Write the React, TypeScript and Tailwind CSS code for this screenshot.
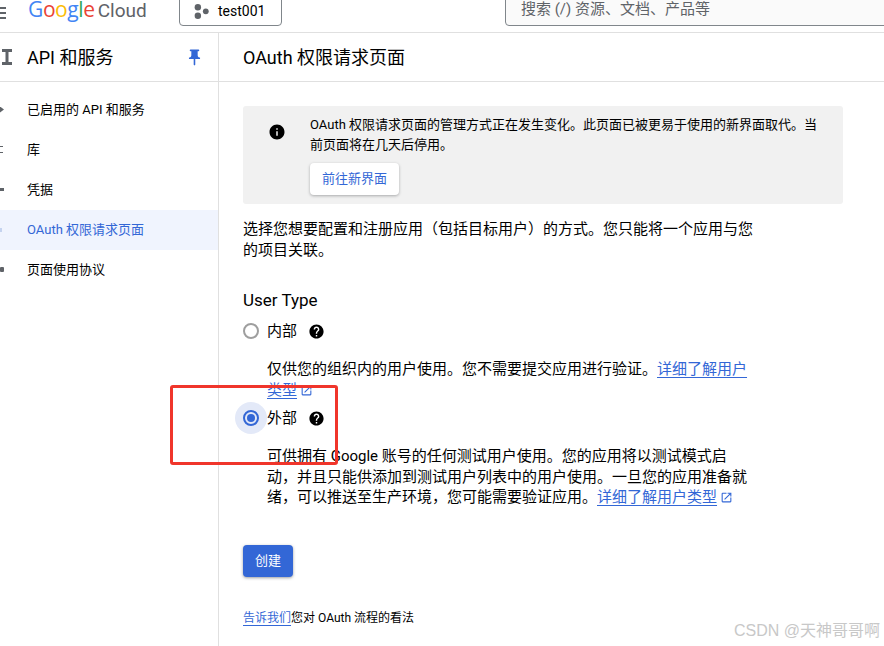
import React from 'react';

const font = { fontFamily: '"Roboto", "Noto Sans CJK SC", sans-serif' };

const navItems = ['已启用的 API 和服务', '库', '凭据', 'OAuth 权限请求页面', '页面使用协议'];

const ExternalIcon = () => (
    <svg viewBox="0 0 24 24" className="inline-block w-[13px] h-[13px] ml-[3px] align-[-2px] fill-[#3367d6]">
        <path d="M19 19H5V5h7V3H5a2 2 0 0 0-2 2v14a2 2 0 0 0 2 2h14a2 2 0 0 0 2-2v-7h-2v7zM14 3v2h3.59l-9.83 9.83 1.41 1.41L19 6.41V10h2V3h-7z" />
    </svg>
);

const HelpIcon = () => (
    <svg viewBox="0 0 24 24" className="w-[17px] h-[17px] fill-black">
        <path d="M12 2C6.48 2 2 6.48 2 12s4.48 10 10 10 10-4.48 10-10S17.52 2 12 2zm1 17h-2v-2h2v2zm2.07-7.75-.9.92C13.45 12.9 13 13.5 13 15h-2v-.5c0-1.1.45-2.1 1.17-2.83l1.24-1.26c.37-.36.59-.86.59-1.41 0-1.1-.9-2-2-2s-2 .9-2 2H8c0-2.21 1.79-4 4-4s4 1.79 4 4c0 .88-.36 1.68-.93 2.25z" />
    </svg>
);

const SideGlyph = ({ index }: { index: number }) => {
    if (index === 0) return <span className="w-[4px] h-[6px] bg-[#5f6368] [clip-path:polygon(0_0,100%_50%,0_100%)]" />;
    if (index === 1) return <span className="w-[3px] h-[7px] border-y border-[#5f6368]" />;
    if (index === 2) return <span className="w-[4px] h-[3px] bg-[#5f6368]" />;
    if (index === 3) return <span className="w-[2px] h-[4px] bg-[#c5d3ef]" />;
    return <span className="w-[4px] h-[5px] bg-[#5f6368] rounded-[1px]" />;
};

export default function App() {
    return (
        <div style={font} className="relative w-[884px] h-[646px] overflow-hidden bg-white text-black">
            {/* top bar */}
            <header className="flex h-[33px] border-b border-[#e0e0e0]">
                <div className="w-[28px] pt-[7px] flex flex-col gap-[3px] shrink-0 h-[24px]">
                    <span className="w-[6px] h-[2px] bg-[#5f6368]" />
                    <span className="w-[6px] h-[2px] bg-[#5f6368]" />
                    <span className="w-[6px] h-[2px] bg-[#5f6368]" />
                </div>
                <div className="w-[151px] shrink-0 -mt-[6px] text-[21px] leading-[30px] tracking-[-0.4px] whitespace-nowrap" style={{ fontFamily: '"Open Sans", sans-serif' }}>
                    <span className="text-[#4285f4]">G</span>
                    <span className="text-[#ea4335]">o</span>
                    <span className="text-[#fbbc05]">o</span>
                    <span className="text-[#4285f4]">g</span>
                    <span className="text-[#34a853]">l</span>
                    <span className="text-[#ea4335]">e</span>
                    <span className="ml-[3px] text-[#5f6368] text-[19px] tracking-normal" style={font}>Cloud</span>
                </div>
                <div className="w-[103px] h-[27px] -mt-px shrink-0 flex items-center gap-[9px] pl-[14px] pb-[2px] border border-[#80868b] rounded-b-[4px]">
                    <svg viewBox="0 0 14 14" className="w-[15px] h-[15px] fill-[#5f6368]">
                        <circle cx="3.6" cy="3" r="3" />
                        <circle cx="11" cy="6.8" r="2.7" />
                        <circle cx="3.6" cy="11" r="3" />
                    </svg>
                    <span className="text-[14px]">test001</span>
                </div>
                <div className="ml-[223px] flex-1 h-[27px] -mt-px -mr-[20px] pl-[15px] pb-[7px] flex items-center border border-[#80868b] rounded-bl-[4px] bg-[#fafafa] text-[15px] text-[#5f6368]">
                    搜索 (/) 资源、文档、产品等
                </div>
            </header>

            <div className="flex h-[613px]">
                {/* sidebar */}
                <aside className="w-[219px] shrink-0 border-r border-[#e0e0e0]">
                    <div className="flex items-center h-[49px] border-b border-[#e0e0e0]">
                        <svg viewBox="0 0 10 16" className="ml-[2px] w-[10px] h-[16px] fill-[#5f6368] shrink-0">
                            <path d="M0 0h10v3H6.5v10H10v3H0v-3h3.500V3H0z" />
                        </svg>
                        <span className="ml-[15px] text-[18px]">API 和服务</span>
                        <svg viewBox="0 0 24 24" className="ml-auto mr-[14px] w-[19px] h-[19px] fill-[#3367d6]">
                            <path d="M16 9V4h1a1 1 0 0 0 0-2H7a1 1 0 0 0 0 2h1v5c0 1.66-1.34 3-3 3v2h5.97v7l1 1 1-1v-7H19v-2c-1.66 0-3-1.34-3-3z" />
                        </svg>
                    </div>
                    <nav className="pt-[8px]">
                        {navItems.map((item, i) => (
                            <div
                                key={item}
                                className={`flex items-center h-[40px] pb-[1px] text-[13px] ${i === 3 ? 'bg-[#f0f4fe] text-[#3367d6]' : ''}`}
                            >
                                <span className="w-[27px] flex shrink-0">
                                    <SideGlyph index={i} />
                                </span>
                                {item}
                            </div>
                        ))}
                    </nav>
                </aside>

                {/* main */}
                <main className="flex-1 min-w-0">
                    <div className="flex items-center h-[49px] pl-[24px] border-b border-[#e0e0e0] text-[18px]">
                        OAuth 权限请求页面
                    </div>
                    <div className="pl-[24px] pt-[24px]">
                        <div className="flex w-[600px] h-[98px] bg-[#f1f1f1] rounded-[3px]">
                            <svg viewBox="0 0 24 24" className="ml-[25px] mt-[17px] w-[18px] h-[18px] fill-black shrink-0">
                                <path d="M12 2C6.48 2 2 6.48 2 12s4.48 10 10 10 10-4.48 10-10S17.52 2 12 2zm1 15h-2v-6h2v6zm0-8h-2V7h2v2z" />
                            </svg>
                            <div className="ml-[24px] pt-[9px] w-[516px]">
                                <p className="text-[13px] leading-[20px]">
                                    OAuth 权限请求页面的管理方式正在发生变化。此页面已被更易于使用的新界面取代。当前页面将在几天后停用。
                                </p>
                                <button className="mt-[8px] w-[89px] h-[32px] bg-white rounded-[4px] text-[13px] text-[#3367d6] shadow-[0_1px_3px_rgba(60,64,67,0.4)]">
                                    前往新界面
                                </button>
                            </div>
                        </div>

                        <p className="mt-[15px] w-[512px] text-[15px] leading-[21px]">
                            选择您想要配置和注册应用（包括目标用户）的方式。您只能将一个应用与您的项目关联。
                        </p>

                        <h2 className="mt-[27px] text-[17px] leading-[24px]">User Type</h2>

                        <div className="flex items-center mt-[7px] h-[24px]">
                            <span className="w-[16px] h-[16px] rounded-full border-2 border-[#9e9e9e]" />
                            <span className="ml-[8px] text-[15px]">内部</span>
                            <span className="ml-[11px]"><HelpIcon /></span>
                        </div>
                        <p className="mt-[16px] ml-[24px] w-[486px] text-[15px] leading-[21px]">
                            仅供您的组织内的用户使用。您不需要提交应用进行验证。
                            <a className="text-[#3367d6] underline underline-offset-[3px]">详细了解用户类型</a>
                            <ExternalIcon />
                        </p>

                        <div className="flex items-center mt-[5px] h-[24px] relative">
                            <span className="absolute -left-[8px] w-[32px] h-[32px] rounded-full bg-[#e3e9f8]" />
                            <span className="relative w-[16px] h-[16px] rounded-full border-2 border-[#3367d6] flex items-center justify-center">
                                <span className="w-[8px] h-[8px] rounded-full bg-[#3367d6]" />
                            </span>
                            <span className="relative ml-[8px] text-[15px]">外部</span>
                            <span className="relative ml-[11px]"><HelpIcon /></span>
                        </div>
                        <p className="mt-[16px] ml-[24px] w-[486px] text-[15px] leading-[20.5px]">
                            可供拥有 Google 账号的任何测试用户使用。您的应用将以测试模式启动，并且只能供添加到测试用户列表中的用户使用。一旦您的应用准备就绪，可以推送至生产环境，您可能需要验证应用。
                            <a className="text-[#3367d6] underline underline-offset-[3px]">详细了解用户类型</a>
                            <ExternalIcon />
                        </p>

                        <button className="block mt-[37px] w-[50px] h-[32px] bg-[#3367d6] text-white text-[13px] rounded-[4px] shadow-[0_1px_3px_rgba(60,64,67,0.5)]">
                            创建
                        </button>

                        <p className="mt-[32px] text-[12px] leading-[18px]">
                            <a className="text-[#3367d6] underline underline-offset-[3px]">告诉我们</a>您对 OAuth 流程的看法
                        </p>
                    </div>
                </main>
            </div>

            {/* annotation and watermark drawn over the page */}
            <div className="absolute left-[170px] top-[385px] w-[168px] h-[80px] border-[3px] border-[#f0352b] rounded-[3px]" />
            <div className="absolute right-[4px] bottom-[3px] text-[16px] text-[#c8c8c8]" style={{ fontFamily: '"Liberation Sans", "Noto Sans CJK SC", sans-serif' }}>
                CSDN @天神哥哥啊
            </div>
        </div>
    );
}
